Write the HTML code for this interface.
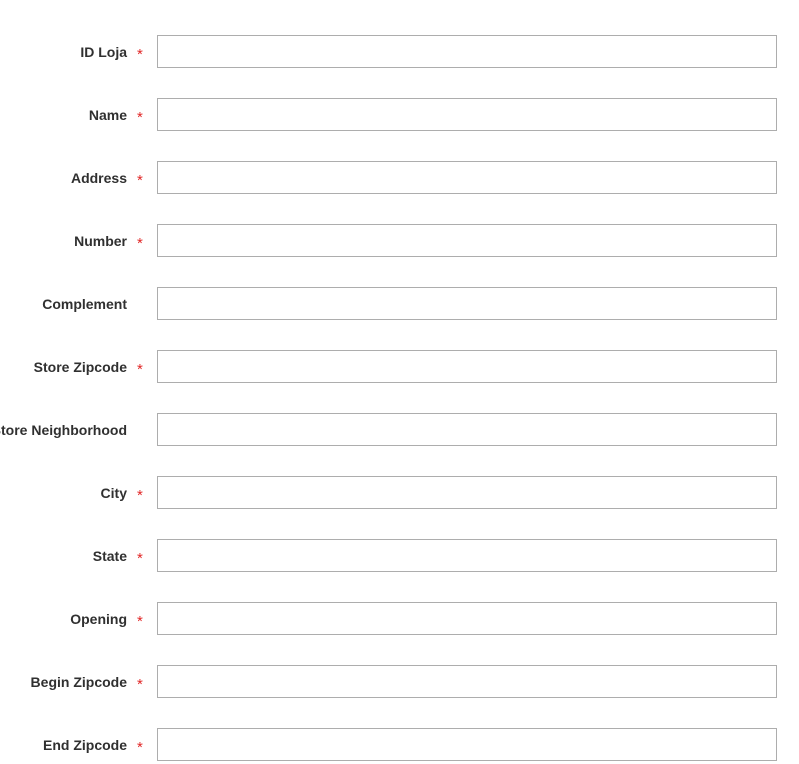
<!DOCTYPE html>
<html><head><meta charset="utf-8"><style>
body{margin:0;background:#fff;width:799px;height:764px;overflow:hidden;position:relative;font-family:"Liberation Sans",sans-serif}
.row{position:absolute;left:0;width:799px;height:33px}
.lbl{position:absolute;right:672px;top:1px;line-height:33px;font-size:14px;font-weight:bold;color:#303030;white-space:nowrap}
.req{position:absolute;left:137px;top:3px;line-height:33px;font-size:15px;color:#e22626}
.in{position:absolute;left:157px;top:0;width:618px;height:31px;border:1px solid #adadad;background:#fff}
</style></head><body>
<div class="row" style="top:35px"><span class="lbl">ID Loja</span><span class="req">*</span><div class="in"></div></div>
<div class="row" style="top:98px"><span class="lbl">Name</span><span class="req">*</span><div class="in"></div></div>
<div class="row" style="top:161px"><span class="lbl">Address</span><span class="req">*</span><div class="in"></div></div>
<div class="row" style="top:224px"><span class="lbl">Number</span><span class="req">*</span><div class="in"></div></div>
<div class="row" style="top:287px"><span class="lbl">Complement</span><div class="in"></div></div>
<div class="row" style="top:350px"><span class="lbl">Store Zipcode</span><span class="req">*</span><div class="in"></div></div>
<div class="row" style="top:413px"><span class="lbl">Store Neighborhood</span><div class="in"></div></div>
<div class="row" style="top:476px"><span class="lbl">City</span><span class="req">*</span><div class="in"></div></div>
<div class="row" style="top:539px"><span class="lbl">State</span><span class="req">*</span><div class="in"></div></div>
<div class="row" style="top:602px"><span class="lbl">Opening</span><span class="req">*</span><div class="in"></div></div>
<div class="row" style="top:665px"><span class="lbl">Begin Zipcode</span><span class="req">*</span><div class="in"></div></div>
<div class="row" style="top:728px"><span class="lbl">End Zipcode</span><span class="req">*</span><div class="in"></div></div>
</body></html>
